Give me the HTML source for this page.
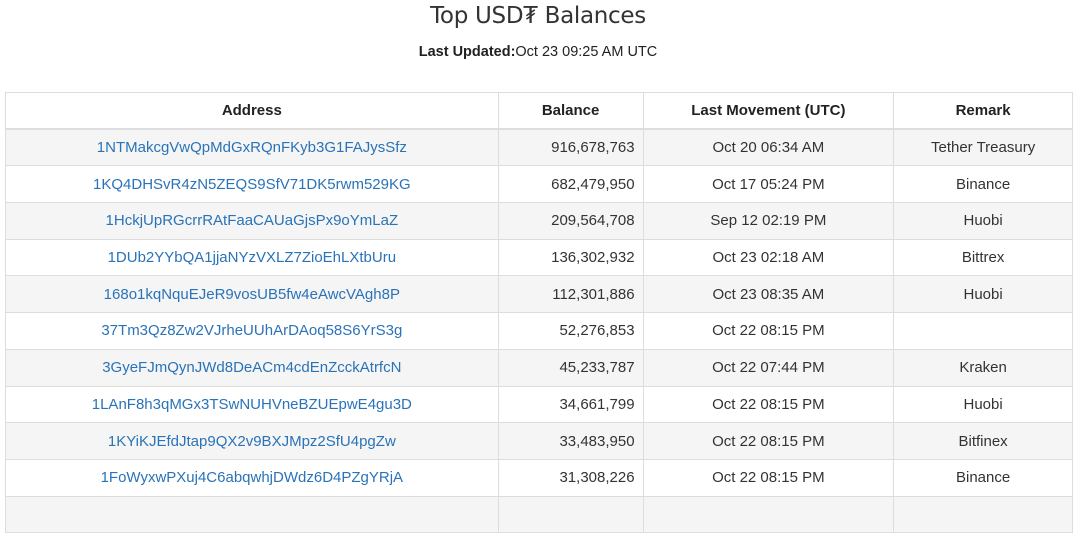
<!DOCTYPE html>
<html><head><meta charset="utf-8"><style>
body{margin:0;width:1080px;height:498px;overflow:hidden;background:#fff;font-family:"Liberation Sans",Arial,sans-serif;color:#333}
h1{position:absolute;top:1px;left:0;width:1076px;margin:0;text-align:center;font-size:23px;font-weight:normal;line-height:30px;color:#333;font-family:"DejaVu Sans","Liberation Sans",sans-serif;letter-spacing:-0.3px}
.sub{position:absolute;top:43px;left:0;width:1076px;text-align:center;font-size:14.5px;line-height:18px;color:#222}
table{position:absolute;top:92px;left:5px;width:1068px;border-collapse:collapse;font-size:15px}
td,th{border:1px solid #ddd;padding:0 8px;text-align:center;height:36.7px;box-sizing:border-box}
th{font-weight:bold;color:#222;border-bottom:2px solid #ddd}
tbody tr:nth-child(odd){background:#f5f5f5}
td.a{color:#2a73b8}
td.b{text-align:right;padding-right:8px}
</style></head><body>
<h1>Top USD₮ Balances</h1>
<div class="sub"><b>Last Updated:</b>Oct 23 09:25 AM UTC</div>
<table>
<colgroup><col style="width:493px"><col style="width:145px"><col style="width:251px"><col style="width:179px"></colgroup>
<thead><tr><th>Address</th><th>Balance</th><th>Last Movement (UTC)</th><th>Remark</th></tr></thead>
<tbody>
<tr><td class="a">1NTMakcgVwQpMdGxRQnFKyb3G1FAJysSfz</td><td class="b">916,678,763</td><td>Oct 20 06:34 AM</td><td>Tether Treasury</td></tr>
<tr><td class="a">1KQ4DHSvR4zN5ZEQS9SfV71DK5rwm529KG</td><td class="b">682,479,950</td><td>Oct 17 05:24 PM</td><td>Binance</td></tr>
<tr><td class="a">1HckjUpRGcrrRAtFaaCAUaGjsPx9oYmLaZ</td><td class="b">209,564,708</td><td>Sep 12 02:19 PM</td><td>Huobi</td></tr>
<tr><td class="a">1DUb2YYbQA1jjaNYzVXLZ7ZioEhLXtbUru</td><td class="b">136,302,932</td><td>Oct 23 02:18 AM</td><td>Bittrex</td></tr>
<tr><td class="a">168o1kqNquEJeR9vosUB5fw4eAwcVAgh8P</td><td class="b">112,301,886</td><td>Oct 23 08:35 AM</td><td>Huobi</td></tr>
<tr><td class="a">37Tm3Qz8Zw2VJrheUUhArDAoq58S6YrS3g</td><td class="b">52,276,853</td><td>Oct 22 08:15 PM</td><td></td></tr>
<tr><td class="a">3GyeFJmQynJWd8DeACm4cdEnZcckAtrfcN</td><td class="b">45,233,787</td><td>Oct 22 07:44 PM</td><td>Kraken</td></tr>
<tr><td class="a">1LAnF8h3qMGx3TSwNUHVneBZUEpwE4gu3D</td><td class="b">34,661,799</td><td>Oct 22 08:15 PM</td><td>Huobi</td></tr>
<tr><td class="a">1KYiKJEfdJtap9QX2v9BXJMpz2SfU4pgZw</td><td class="b">33,483,950</td><td>Oct 22 08:15 PM</td><td>Bitfinex</td></tr>
<tr><td class="a">1FoWyxwPXuj4C6abqwhjDWdz6D4PZgYRjA</td><td class="b">31,308,226</td><td>Oct 22 08:15 PM</td><td>Binance</td></tr>
<tr><td class="a">&nbsp;</td><td class="b"></td><td></td><td></td></tr>
</tbody></table>
</body></html>
